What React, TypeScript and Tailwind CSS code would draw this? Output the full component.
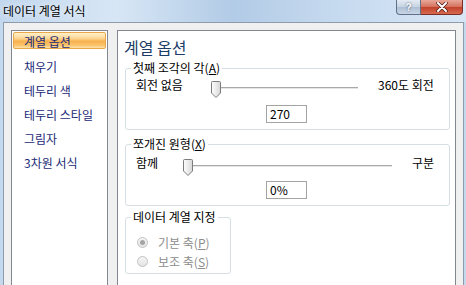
import React from "react";

function Thumb() {
  return (
    <svg width="10" height="17" viewBox="0 0 10 17" className="block">
      <defs>
        <linearGradient id="tg" x1="0" y1="0" x2="1" y2="0">
          <stop offset="0" stopColor="#fdfdfd" />
          <stop offset="0.5" stopColor="#ececec" />
          <stop offset="1" stopColor="#d6d6d6" />
        </linearGradient>
      </defs>
      <path d="M1.5 0.5 H8.5 Q9.5 0.5 9.5 1.5 V12 L5 16.5 L0.5 12 V1.5 Q0.5 0.5 1.5 0.5 Z" fill="url(#tg)" stroke="#7c7c7c" strokeWidth="1" />
    </svg>
  );
}

function Slider({ className }: { className: string }) {
  return (
    <div className={"relative h-[22px] shrink-0 " + className}>
      <div className="absolute left-[4px] right-0 top-[11px] h-[2px] border-t border-[#a9a9a9] bg-[#e6e6e6]" />
      <div className="absolute left-0 top-[5px]">
        <Thumb />
      </div>
    </div>
  );
}

function Radio({ checked }: { checked?: boolean }) {
  return (
    <div className="flex h-[11px] w-[11px] items-center justify-center rounded-full border border-[#c2c2c2] bg-[linear-gradient(to_bottom,#f6f6f6,#e4e4e4)]">
      {checked && <div className="h-[5px] w-[5px] rounded-full bg-[#a4a4a4]" />}
    </div>
  );
}

export default function App() {
  return (
    <div className="relative h-[285px] w-[466px] overflow-hidden bg-[#c4d8ee] font-['Noto_Sans_CJK_KR',sans-serif] text-[12px] text-black">
      {/* title bar */}
      <div className="flex h-[22px] bg-[linear-gradient(to_right,#c2d7ee_0%,#d7e6f5_25%,#b2cbe6_50%,#c6daef_72%,#d8e6f5_100%)]">
        <div className="pl-[3px] pt-[3px] leading-[16px] [text-shadow:0_0_6px_#ffffff]">데이터 계열 서식</div>
        <div className="ml-auto mr-[3px] flex h-[15px]">
          <div className="flex h-[15px] w-[25px] items-center justify-center rounded-bl-[4px] border border-t-0 border-[#5f7088] bg-[linear-gradient(to_bottom,#e4ebf3,#c5d3e3_50%,#aebfd4_51%,#c9d6e6)] font-['Liberation_Sans',sans-serif] text-[10px] font-bold leading-[13px] text-white [text-shadow:0_0_2px_#33445a]">
            ?
          </div>
          <div className="flex h-[15px] w-[42px] items-center justify-center rounded-br-[4px] border border-l-0 border-t-0 border-[#7b2e24] bg-[linear-gradient(to_bottom,#e8a899,#d4705c_50%,#c2402a_51%,#d66a4f)]">
            <svg width="12" height="10" viewBox="0 0 12 10">
              <path d="M2 1 L10 9 M10 1 L2 9" stroke="#4a1a14" strokeWidth="3.4" strokeLinecap="round" />
              <path d="M2 1 L10 9 M10 1 L2 9" stroke="#ffffff" strokeWidth="2" strokeLinecap="round" />
            </svg>
          </div>
        </div>
      </div>

      {/* body */}
      <div className="ml-[3px] flex h-[263px] w-[461px] gap-[9px] border border-b-0 border-[#8d9bad] bg-[#f0f0f0] pl-[7px] pt-[7px]">
        {/* list */}
        <div className="h-[260px] w-[97px] shrink-0 border border-[#828790] bg-white p-[1px] text-[#1c2a78]">
          <div className="h-[17px] rounded-[2px] border border-[#e9a74a] bg-[linear-gradient(to_bottom,#fff1cc_0%,#fcd796_35%,#f9b14e_55%,#fbc771_85%,#fde3ad_100%)] pl-[10px] pt-[1px] leading-[16px]">
            계열 옵션
          </div>
          <div className="mt-[6px] flex flex-col">
            <div className="h-[24px] pl-[11px] leading-[24px]">채우기</div>
            <div className="h-[24px] pl-[11px] leading-[24px]">테두리 색</div>
            <div className="h-[24px] pl-[11px] leading-[24px]">테두리 스타일</div>
            <div className="h-[24px] pl-[11px] leading-[24px]">그림자</div>
            <div className="h-[24px] pl-[11px] leading-[24px]">3차원 서식</div>
          </div>
        </div>

        {/* panel */}
        <div className="h-[260px] w-[339px] shrink-0 border border-[#828790] bg-white">
          <div className="ml-[6px] mt-[6px] text-[16px] leading-[20px] text-[#1c3b66]">계열 옵션</div>

          <fieldset className="ml-[7px] mt-[4px] w-[325px] rounded-[3px] border border-[#d5dfe5] p-0 pb-[6px]">
            <legend className="ml-[5px] px-[2px] leading-[14px]">
              첫째 조각의 각(<span className="underline underline-offset-1">A</span>)
            </legend>
            <div className="mt-[1px] flex h-[22px]">
              <span className="ml-[10px] w-[75px] shrink-0 leading-[18px]">회전 없음</span>
              <Slider className="w-[147px]" />
              <span className="ml-[20px] leading-[18px]">360도 회전</span>
            </div>
            <div className="ml-[140px] mt-[7px] h-[18px] w-[41px] border border-[#a3a3a3] pl-[3px] leading-[16px]">270</div>
          </fieldset>

          <fieldset className="ml-[7px] mt-[7px] w-[325px] rounded-[3px] border border-[#d5dfe5] p-0 pb-[6px]">
            <legend className="ml-[5px] px-[2px] leading-[14px]">
              쪼개진 원형(<span className="underline underline-offset-1">X</span>)
            </legend>
            <div className="mt-[3px] flex h-[22px]">
              <span className="ml-[10px] w-[47px] shrink-0 leading-[18px]">함께</span>
              <Slider className="w-[209px]" />
              <span className="ml-[20px] leading-[18px]">구분</span>
            </div>
            <div className="ml-[140px] mt-[5px] h-[18px] w-[41px] border border-[#a3a3a3] pl-[3px] leading-[16px]">0%</div>
          </fieldset>

          <fieldset className="ml-[7px] mt-[4px] w-[106px] rounded-[3px] border border-[#d5dfe5] p-0 pb-[2px]">
            <legend className="ml-[5px] px-[2px] leading-[14px]">데이터 계열 지정</legend>
            <div className="mt-[9px] flex h-[19px] items-center pl-[11px] text-[#8d8d8d]">
              <Radio checked />
              <span className="ml-[10px] leading-[16px]">
                기본 축(<span className="underline underline-offset-1">P</span>)
              </span>
            </div>
            <div className="flex h-[19px] items-center pl-[11px] text-[#8d8d8d]">
              <Radio />
              <span className="ml-[10px] leading-[16px]">
                보조 축(<span className="underline underline-offset-1">S</span>)
              </span>
            </div>
          </fieldset>
        </div>
      </div>
    </div>
  );
}
